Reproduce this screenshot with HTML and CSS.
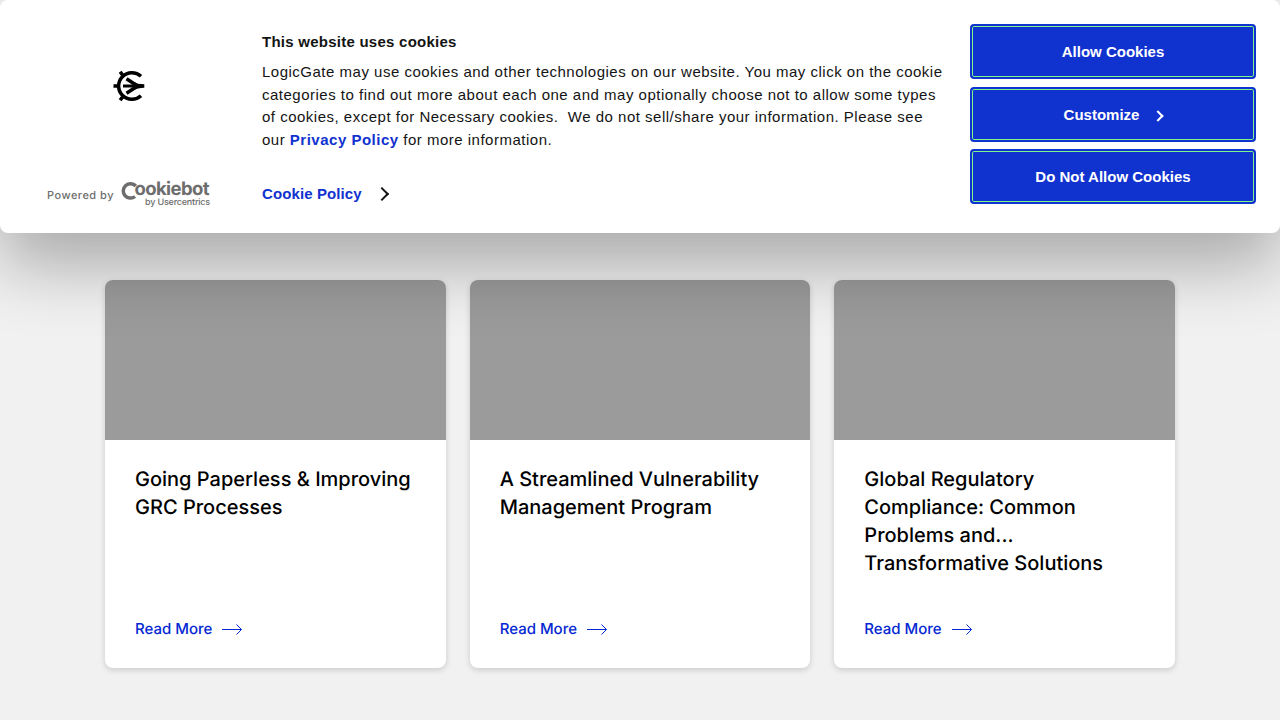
FILE: index.html
```html
<!DOCTYPE html>
<html lang="en">
<head>
<meta charset="utf-8">
<title>Resources</title>
<link rel="stylesheet" href="styles.css">
</head>
<body>
<main class="resources">
  <article class="card">
    <div class="card-image"></div>
    <div class="card-body">
      <h3 class="card-title">Going Paperless &amp; Improving GRC Processes</h3>
      <a class="read-more">Read More <svg width="20" height="11" viewBox="0 0 20 11"><path d="M0 5.5H19.5M14.5 .5L19.5 5.5L14.5 10.5"/></svg></a>
    </div>
  </article>
  <article class="card">
    <div class="card-image"></div>
    <div class="card-body">
      <h3 class="card-title">A Streamlined Vulnerability Management Program</h3>
      <a class="read-more">Read More <svg width="20" height="11" viewBox="0 0 20 11"><path d="M0 5.5H19.5M14.5 .5L19.5 5.5L14.5 10.5"/></svg></a>
    </div>
  </article>
  <article class="card">
    <div class="card-image"></div>
    <div class="card-body">
      <h3 class="card-title">Global Regulatory Compliance: Common Problems and... Transformative Solutions</h3>
      <a class="read-more">Read More <svg width="20" height="11" viewBox="0 0 20 11"><path d="M0 5.5H19.5M14.5 .5L19.5 5.5L14.5 10.5"/></svg></a>
    </div>
  </article>
</main>

<section class="cookie-banner">
  <div class="brand">
    <svg class="brand-logo" width="32" height="32" viewBox="0 0 32 32">
      <g fill="none" stroke="#000" stroke-width="3.5">
        <path d="M28 6.300A13.300 13.300 0 1 0 28 25.700"/>
        <path d="M.5 16H5M7.200 1.700L9.500 5M7.200 30.300L9.500 27"/>
        <path d="M10 16H24" stroke-width="3"/>
        <path d="M13.500 8.700L23 15M13.500 23.300L23 17" stroke-width="3.500"/>
      </g>
      <path d="M20.500 11.800Q24.500 14.300 31.300 14.300V17.700Q24.500 17.700 20.500 20.200Z"/>
    </svg>
    <div class="powered">
      <span class="powered-text">Powered by</span>
      <div class="cookiebot">
        <div class="cookiebot-name"><svg width="18" height="19" viewBox="0 0 18 19"><path d="M14.800 5A7.200 7.200 0 1 0 14 15.500" fill="none" stroke="#6d6d6d" stroke-width="3.500"/></svg><span>ookiebot</span></div>
        <div class="cookiebot-by">by Usercentrics</div>
      </div>
    </div>
  </div>
  <div class="notice">
    <h2 class="notice-title">This website uses cookies</h2>
    <p class="notice-text">LogicGate may use cookies and other technologies on our website. You may click on the cookie categories to find out more about each one and may optionally choose not to allow some types of cookies, except for Necessary cookies.&nbsp; We do not sell/share your information. Please see our <a class="privacy">Privacy Policy</a> for more information.</p>
    <a class="policy">Cookie Policy <i class="chevron"></i></a>
  </div>
  <div class="actions">
    <button class="btn">Allow Cookies</button>
    <button class="btn">Customize <i class="chevron chevron-small"></i></button>
    <button class="btn">Do Not Allow Cookies</button>
  </div>
</section>
</body>
</html>
```
FILE: styles.css
```css
* { box-sizing: border-box; }
body {
  margin: 0;
  height: 720px;
  overflow: hidden;
  background: #f1f1f1;
  font-family: Inter, sans-serif;
}
.resources {
  display: grid;
  grid-template-columns: repeat(3, 1fr);
  gap: 24px;
  width: 1070px;
  margin: 0 auto;
  padding-top: 280px;
  text-rendering: geometricPrecision;
  font-optical-sizing: none;
}
.card {
  display: flex;
  flex-direction: column;
  height: 388px;
  border-radius: 8px;
  overflow: hidden;
  background: #fff;
  box-shadow: 0 2px 6px rgba(0, 0, 0, .16);
}
.card-image { height: 160px; background: #9b9b9b; }
.card-body {
  flex: 1;
  display: flex;
  flex-direction: column;
  justify-content: space-between;
  padding: 25px 30px 27px;
}
.card-title {
  margin: 0;
  font-size: 20px;
  line-height: 28px;
  font-weight: 500;
  color: #000;
}
.read-more {
  display: flex;
  align-items: center;
  gap: 10px;
  font-size: 15px;
  line-height: 24px;
  font-weight: 500;
  color: #0528d2;
}
.read-more svg { fill: none; stroke: #0528d2; stroke-width: 1; }

.cookie-banner {
  position: absolute;
  top: 0;
  left: 0;
  display: flex;
  width: 1280px;
  height: 233px;
  padding: 24px;
  border-radius: 8px;
  background: #fff;
  box-shadow: 0 32px 68px rgba(0, 0, 0, .3);
  font-family: "Liberation Sans", Arial, sans-serif;
  font-size: 15px;
  color: #141414;
}
.brand {
  display: flex;
  flex-direction: column;
  justify-content: space-between;
  width: 238px;
  padding: 46px 0 1px 23px;
}
.brand-logo { display: block; margin-left: 66px; }
.powered { display: flex; align-items: flex-end; color: #6d6d6d; text-rendering: geometricPrecision; }
.powered-text {
  width: 74px;
  font: 500 11px/14px Inter, sans-serif;
  letter-spacing: .5px;
  padding-bottom: 6px;
  white-space: nowrap;
}
.cookiebot { width: 90px; }
.cookiebot-name {
  display: flex;
  height: 17px;
  font: 700 18.5px/17px Inter, sans-serif;
  letter-spacing: -.6px;
  white-space: nowrap;
}
.cookiebot-name svg { flex: none; margin-right: -4.5px; }
.cookiebot-by {
  text-align: right;
  font: 500 9px/10px Inter, sans-serif;
  letter-spacing: -.2px;
  margin-right: 1px;
}
.notice { width: 684px; padding-top: 7px; }
.notice-title {
  margin: 0 0 8px;
  font-size: 15px;
  line-height: 22px;
  letter-spacing: .25px;
}
.notice-text { margin: 0; line-height: 22.5px; letter-spacing: .5px; }
.privacy { color: #1032cf; font-weight: 700; }
.policy {
  display: flex;
  align-items: center;
  gap: 15px;
  margin-top: 32px;
  line-height: 22px;
  font-weight: 700;
  letter-spacing: .1px;
  color: #1032cf;
}
.chevron {
  display: inline-block;
  width: 10px;
  height: 10px;
  border: solid #141414;
  border-width: 2px 2px 0 0;
  transform: rotate(45deg);
}
.chevron-small { width: 8px; height: 8px; margin-top: 3px; border-color: #fff; }
.actions { display: flex; flex-direction: column; gap: 7.5px; width: 286px; margin-left: auto; }
.btn {
  display: flex;
  align-items: center;
  justify-content: center;
  gap: 15px;
  height: 55px;
  border: 2px solid #1032cf;
  border-radius: 4px;
  background: #1032cf;
  box-shadow: inset 0 0 0 1px #80f58c;
  color: #fff;
  font: 700 15px "Liberation Sans", Arial, sans-serif;
}
```
